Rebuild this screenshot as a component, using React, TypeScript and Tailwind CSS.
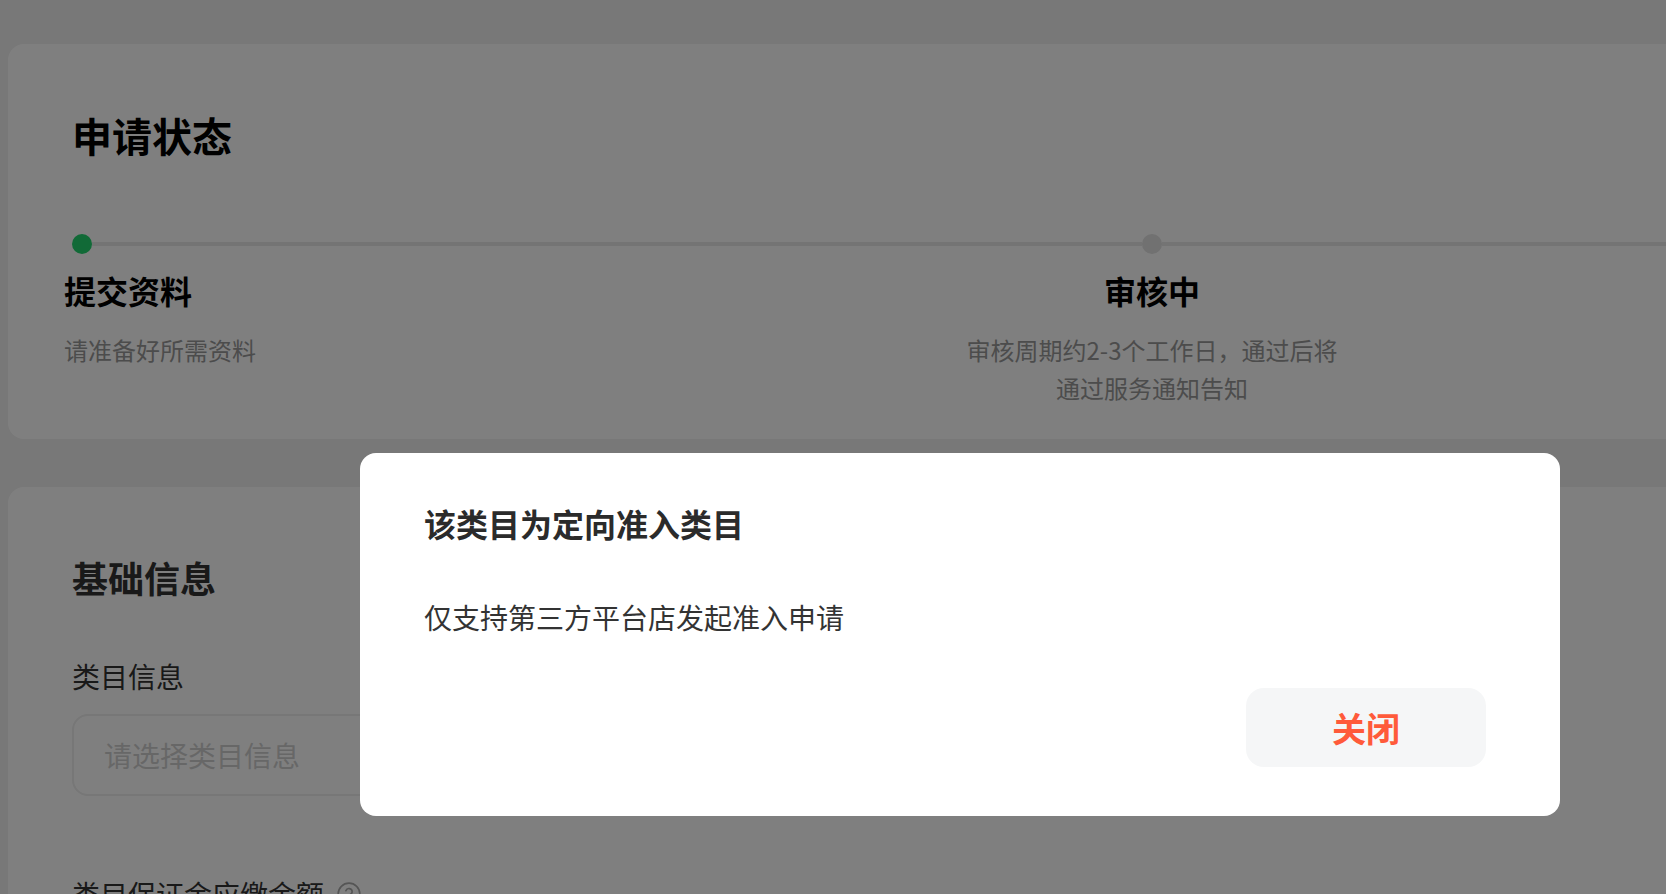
import { CircleHelp } from 'lucide-react';

type Step = {
  title?: string;
  desc?: string;
  active: boolean;
  align: 'left' | 'center' | 'right';
};

const steps: Step[] = [
  { title: '提交资料', desc: '请准备好所需资料', active: true, align: 'left' },
  { title: '审核中', desc: '审核周期约2-3个工作日，通过后将通过服务通知告知', active: false, align: 'center' },
  // last step sits off-screen, only its line/dot matters
  { active: false, align: 'right' },
];

const StepItem = ({ step }: { step: Step }) => {
  const dot = (
    <span
      className={
        step.active
          ? 'size-[20px] shrink-0 rounded-full bg-[#22d46e]'
          : 'size-[20px] shrink-0 rounded-full bg-[#e2e2e2]'
      }
    />
  );
  const line = <span className="h-[4px] flex-1 bg-[#e8e8e8]" />;

  return (
    <div
      className={
        step.align === 'left'
          ? 'flex flex-col items-start'
          : step.align === 'center'
            ? 'flex flex-col items-center text-center'
            : 'flex flex-col items-end text-right'
      }
    >
      {/* Dot row */}
      <div className="flex h-[20px] w-full items-center">
        {step.align === 'left' && (
          <>
            <span className="w-[8px]" />
            {dot}
            {line}
          </>
        )}
        {step.align === 'center' && (
          <>
            {line}
            {dot}
            {line}
          </>
        )}
        {step.align === 'right' && (
          <>
            {line}
            {dot}
            <span className="w-[8px]" />
          </>
        )}
      </div>

      {step.title && (
        <div className="mt-[16px] text-[32px] font-bold leading-[40px] text-black">{step.title}</div>
      )}
      {step.desc && (
        <div className="mt-[21px] w-[392px] text-[24px] leading-[38px] text-[#999]">{step.desc}</div>
      )}
    </div>
  );
};

const App = () => {
  return (
    <div className="relative h-[894px] w-full overflow-hidden bg-[#f0f0f0] font-['Noto_Sans_CJK_SC','Noto_Sans',sans-serif]">
      <div className="flex w-[2296px] flex-col gap-[48px] pl-[8px] pt-[44px]">
        {/* Application status */}
        <section className="h-[395px] rounded-[16px] bg-white px-[56px] pt-[66px]">
          <h2 className="pl-[8px] text-[40px] font-bold leading-[50px] text-black">申请状态</h2>
          <div className="mt-[74px] grid grid-cols-3">
            {steps.map((s, i) => (
              <StepItem key={i} step={s} />
            ))}
          </div>
        </section>

        {/* Basic info */}
        <section className="h-[600px] rounded-[16px] bg-white px-[64px] pt-[65px]">
          <h2 className="text-[36px] font-bold leading-[50px] text-[#333]">基础信息</h2>

          <div className="mt-[55px] text-[28px] leading-[38px] text-[#333]">类目信息</div>
          <div className="mt-[19px] flex h-[82px] w-[1240px] items-center rounded-[16px] border-2 border-[#eeeeee] px-[30px] text-[28px] text-[#cfcfcf]">
            请选择类目信息
          </div>

          <div className="mt-[79px] flex items-center gap-[12px] text-[28px] leading-[38px] text-[#333]">
            <span>类目保证金应缴金额</span>
            <CircleHelp className="size-[26px] text-[#aaa]" strokeWidth={1.5} />
          </div>
        </section>
      </div>

      {/* Modal */}
      <div className="absolute inset-0 bg-black/50 pl-[360px] pt-[453px]">
        <div className="flex h-[363px] w-[1200px] flex-col rounded-[16px] bg-white pl-[64px] pr-[74px] pt-[49px]">
          <h3 className="text-[32px] font-semibold leading-[42px] text-[#2b2b2b]">该类目为定向准入类目</h3>
          <p className="mt-[53px] text-[28px] leading-[40px] text-[#333]">仅支持第三方平台店发起准入申请</p>
          <div className="mb-[49px] mt-auto flex justify-end">
            <button className="h-[79px] w-[240px] rounded-[18px] bg-[#f5f6f7] text-[34px] font-semibold text-[#ff5a3a]">
              关闭
            </button>
          </div>
        </div>
      </div>
    </div>
  );
}

export default App;
